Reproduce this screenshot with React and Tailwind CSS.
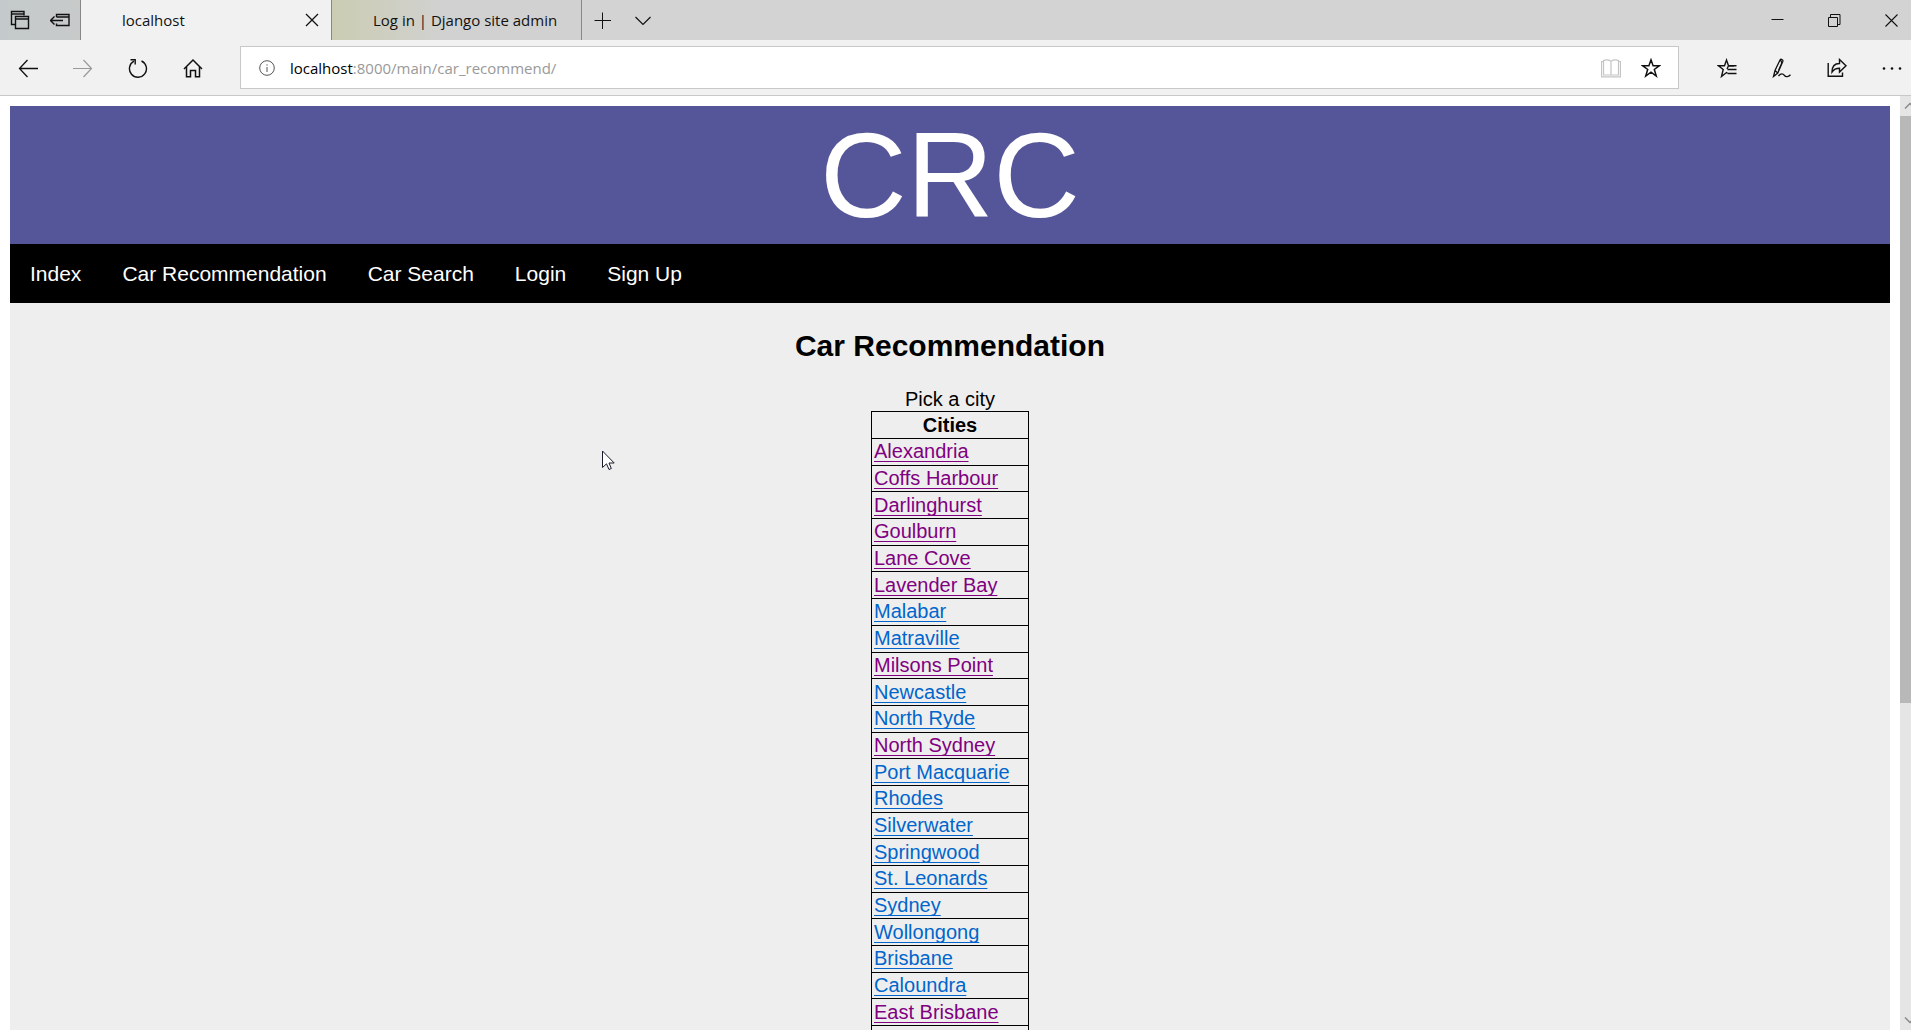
import React from "react";

const navLinks = ["Index", "Car Recommendation", "Car Search", "Login", "Sign Up"];

const cities = [
  { name: "Alexandria", visited: true },
  { name: "Coffs Harbour", visited: true },
  { name: "Darlinghurst", visited: true },
  { name: "Goulburn", visited: true },
  { name: "Lane Cove", visited: true },
  { name: "Lavender Bay", visited: true },
  { name: "Malabar" },
  { name: "Matraville" },
  { name: "Milsons Point", visited: true },
  { name: "Newcastle" },
  { name: "North Ryde" },
  { name: "North Sydney", visited: true },
  { name: "Port Macquarie" },
  { name: "Rhodes" },
  { name: "Silverwater" },
  { name: "Springwood" },
  { name: "St. Leonards" },
  { name: "Sydney" },
  { name: "Wollongong" },
  { name: "Brisbane" },
  { name: "Caloundra" },
  { name: "East Brisbane", visited: true },
];

function Icon({ children, size = 20, width = 1.2, className = "" }) {
  return (
    <svg
      width={size}
      height={size}
      viewBox={`0 0 ${size} ${size}`}
      fill="none"
      stroke="currentColor"
      strokeWidth={width}
      className={className}
      aria-hidden="true"
    >
      {children}
    </svg>
  );
}

function IconButton({ label, className = "w-[55px]", children }) {
  return (
    <button type="button" aria-label={label} className={`flex h-full shrink-0 items-center justify-center ${className}`}>
      {children}
    </button>
  );
}

function TabBar() {
  return (
    <header className="flex h-10 shrink-0 items-stretch bg-[#d3d3d3] text-[15px] text-[#111]">
      <div className="flex w-[81px] shrink-0 border-r border-[#888] bg-linear-to-r from-[#c4cacb] to-[#c8caca]">
        <IconButton label="Tabs you've set aside" className="w-10">
          <Icon width={1.4}>
            <path d="M5.5 14.5H1.5V1.5H14v4" />
            <path d="M1.5 4H14" />
            <path d="M5.5 6.5H18.5V18.5H5.5zM5.5 9H18.5" />
          </Icon>
        </IconButton>
        <IconButton label="Set these tabs aside" className="w-10">
          <Icon width={1.4}>
            <path d="M6.5 7V4.500H19V15.500H6.500V13.500M6.500 7H19" />
            <path d="M0.500 10.500H13M4.500 6.500L0.500 10.500L4.500 14.500" />
          </Icon>
        </IconButton>
      </div>
      <div className="flex w-[251px] shrink-0 items-center border-r border-[#888] bg-[#f1f1f1] pl-[41px]">
        <span className="flex-1">localhost</span>
        <IconButton label="Close tab" className="w-[38px]">
          <Icon size={14} width={1.3}>
            <path d="M1 1L13 13M13 1L1 13" />
          </Icon>
        </IconButton>
      </div>
      <div className="flex w-[250px] shrink-0 items-center border-r border-[#888] bg-linear-to-r from-[#cbccb2] to-[#d1d1d1] to-45% pl-[41px]">
        <span>Log in | Django site admin</span>
      </div>
      <IconButton label="New tab" className="w-[41px]">
        <Icon size={18} width={1}>
          <path d="M0.500 9.500H17M8.500 1.500V18" />
        </Icon>
      </IconButton>
      <IconButton label="Show tab previews" className="w-10">
        <Icon size={18} width={1.2}>
          <path d="M1.500 6L9 13.500L16.500 6" />
        </Icon>
      </IconButton>
      <div className="flex-1" />
      <IconButton label="Minimize" className="w-[57px]">
        <Icon size={13} width={1}>
          <path d="M0.500 5.500H12.500" />
        </Icon>
      </IconButton>
      <IconButton label="Restore" className="w-[57px]">
        <Icon size={13} width={1}>
          <path d="M0.500 3.500H9.500V12.500H0.500zM2.500 3V0.500H12V10.500H10" />
        </Icon>
      </IconButton>
      <IconButton label="Close" className="w-[57px]">
        <Icon size={13} width={1.1}>
          <path d="M0.500 0.500L12.500 12.500M12.500 0.500L0.500 12.500" />
        </Icon>
      </IconButton>
    </header>
  );
}

function Toolbar() {
  return (
    <div className="flex h-14 shrink-0 items-center border-b border-[#c8c8c8] bg-[#f1f1f1] pr-px text-[#111]">
      <IconButton label="Back">
        <Icon width={1.3}>
          <path d="M1.500 10.500H20M9.500 2L1.500 10.500L9.500 19" />
        </Icon>
      </IconButton>
      <IconButton label="Forward">
        <Icon width={1.2} className="text-[#999]">
          <path d="M0 10.500H18.500M10.500 2L18.500 10.500L10.500 19" />
        </Icon>
      </IconButton>
      <IconButton label="Refresh">
        <Icon width={1.4}>
          <path d="M13.500 3A8.500 8.500 0 1 1 6 3.200" />
          <path d="M2.500 1.800H7.200V6.500" />
        </Icon>
      </IconButton>
      <IconButton label="Home">
        <Icon width={1.5}>
          <path d="M1 11L10 2L19 11" />
          <path d="M3.500 9V18.800H7.500V12.500H12.500V18.800H16.500V9" />
        </Icon>
      </IconButton>
      <div className="ml-5 flex h-[43px] flex-1 items-center border border-[#c8c8c8] bg-white">
        <IconButton label="Site information" className="w-[49px] pl-0.5">
          <Icon size={16} width={1} className="text-[#555]">
            <circle cx="8" cy="8" r="7.300" />
            <path d="M8 7V12M8 4.300V5.600" />
          </Icon>
        </IconButton>
        <div className="flex-1 pt-px text-[15px] text-[#999]">
          <span className="text-black">localhost</span>:8000/main/car_recommend/
        </div>
        <IconButton label="Reading view" className="w-10">
          <Icon width={1.2} className="text-[#c4c4c4]">
            <path d="M10 3.500C8.500 1.500 4.500 1.500 2.500 2.500V17H10H17.500V2.500C15.500 1.500 11.500 1.500 10 3.500V17" />
            <path d="M2.500 3.500H0.500V18.800H19.500V3.500H17.500" />
          </Icon>
        </IconButton>
        <IconButton label="Add to favorites" className="w-10">
          <Icon width={1.5}>
            <path d="M10 1.800L12.100 7.700H18.500L13.300 11.500L15.300 18L10 14.200L4.700 18L6.700 11.500L1.500 7.700H7.900z" />
          </Icon>
        </IconButton>
        <div className="w-[7px]" />
      </div>
      <div className="w-5" />
      <IconButton label="Hub">
        <Icon width={1.4}>
          <path d="M17 7.700H11.500L9.500 2L7.500 7.700H1.500L6.200 11.500L4.500 18.500L9.500 14.500L10.500 15.200M10 11L11.500 7.700" />
          <path d="M10.500 11.500H19.500M10.500 15.500H19.500M12 7.700H19.500" />
        </Icon>
      </IconButton>
      <IconButton label="Add notes">
        <Icon width={1.3}>
          <path d="M1.500 18.500L3 12.500L8 2C8.800 0.600 11.500 1.500 10.800 3.500L5.800 15L1.500 18.500zM3 12.500L5.800 15M8.500 1.500L9.800 5L6.500 12.500" />
          <path d="M6.500 18C9 15 11 15.500 12.500 17.500C14 19.500 17 18.500 18.500 16.800" />
        </Icon>
      </IconButton>
      <IconButton label="Share">
        <Icon width={1.4}>
          <path d="M1.200 5V18.300H15.500V14.500" />
          <path d="M5 14C5 8.500 8 5.500 12.500 5.500V1.500L19 7.800L12.500 14V10.200C9 10.200 7 11 5 14z" />
        </Icon>
      </IconButton>
      <IconButton label="More">
        <Icon width={0}>
          <g fill="currentColor">
            <circle cx="2" cy="10.500" r="1.300" />
            <circle cx="10" cy="10.500" r="1.300" />
            <circle cx="18" cy="10.500" r="1.300" />
          </g>
        </Icon>
      </IconButton>
    </div>
  );
}

function CityTable() {
  return (
    <table className="mx-auto h-[642px] w-[158px] border-collapse text-xl leading-[23px]">
      <caption>Pick a city</caption>
      <thead>
        <tr>
          <th scope="col" className="border border-black px-px pt-0.5 pb-px font-bold">Cities</th>
        </tr>
      </thead>
      <tbody>
        {cities.map((city) => (
          <tr key={city.name}>
            <td className="border border-black py-px pr-px pl-0.5">
              <a
                href="#"
                className={`underline decoration-1 underline-offset-[3px] [text-decoration-skip-ink:none] ${
                  city.visited ? "text-[#800080]" : "text-[#0066cc]"
                }`}
              >
                {city.name}
              </a>
            </td>
          </tr>
        ))}
        <tr>
          <td className="border border-black p-px">&nbsp;</td>
        </tr>
      </tbody>
    </table>
  );
}

function CarPage() {
  return (
    <div className="flex min-w-0 flex-1 flex-col overflow-hidden bg-white px-2.5 pt-2.5 font-['Liberation_Sans',Arial,sans-serif]">
      <h1 className="shrink-0 bg-[#555599] text-center text-[120px] leading-[138px] text-white">CRC</h1>
      <nav className="flex h-[59px] shrink-0 items-center gap-[41px] bg-black px-5 text-[21px] text-white">
        {navLinks.map((link) => (
          <a key={link} href="#">{link}</a>
        ))}
      </nav>
      <main className="flex-1 overflow-hidden bg-[#eeeeee] pt-[25px] text-black">
        <h2 className="mb-[25px] text-center text-3xl leading-[35px] font-bold">Car Recommendation</h2>
        <CityTable />
      </main>
    </div>
  );
}

function ScrollBar() {
  return (
    <div className="flex w-5 shrink-0 flex-col bg-[#e5e5e5] text-[#888]">
      <div className="flex h-5 shrink-0 items-center justify-center">
        <Icon size={12} width={1.4}>
          <path d="M1 8.500L6 3.500L11 8.500" />
        </Icon>
      </div>
      <div className="flex flex-1 flex-col">
        <div className="flex-[587] bg-[#b8b8b8]" />
        <div className="flex-[307]" />
      </div>
      <div className="flex h-5 shrink-0 items-center justify-center">
        <Icon size={12} width={1.4}>
          <path d="M1 3.500L6 8.500L11 3.500" />
        </Icon>
      </div>
    </div>
  );
}

export default function App() {
  return (
    <div className="relative h-screen overflow-hidden">
      <div className="-mr-[9px] flex h-full flex-col font-['Open_Sans','Noto_Sans',sans-serif]">
        <TabBar />
        <Toolbar />
        <div className="flex min-h-0 flex-1">
          <CarPage />
          <ScrollBar />
        </div>
      </div>
      <svg width="14" height="21" viewBox="0 0 14 21" className="absolute top-[450px] left-[602px]" aria-hidden="true">
        <path d="M0.500 1V17.500L4.500 13.800L7 19.500L9.300 18.500L7 13H12.200z" fill="#fff" stroke="#1a1a2a" strokeWidth="1" />
      </svg>
    </div>
  );
}
